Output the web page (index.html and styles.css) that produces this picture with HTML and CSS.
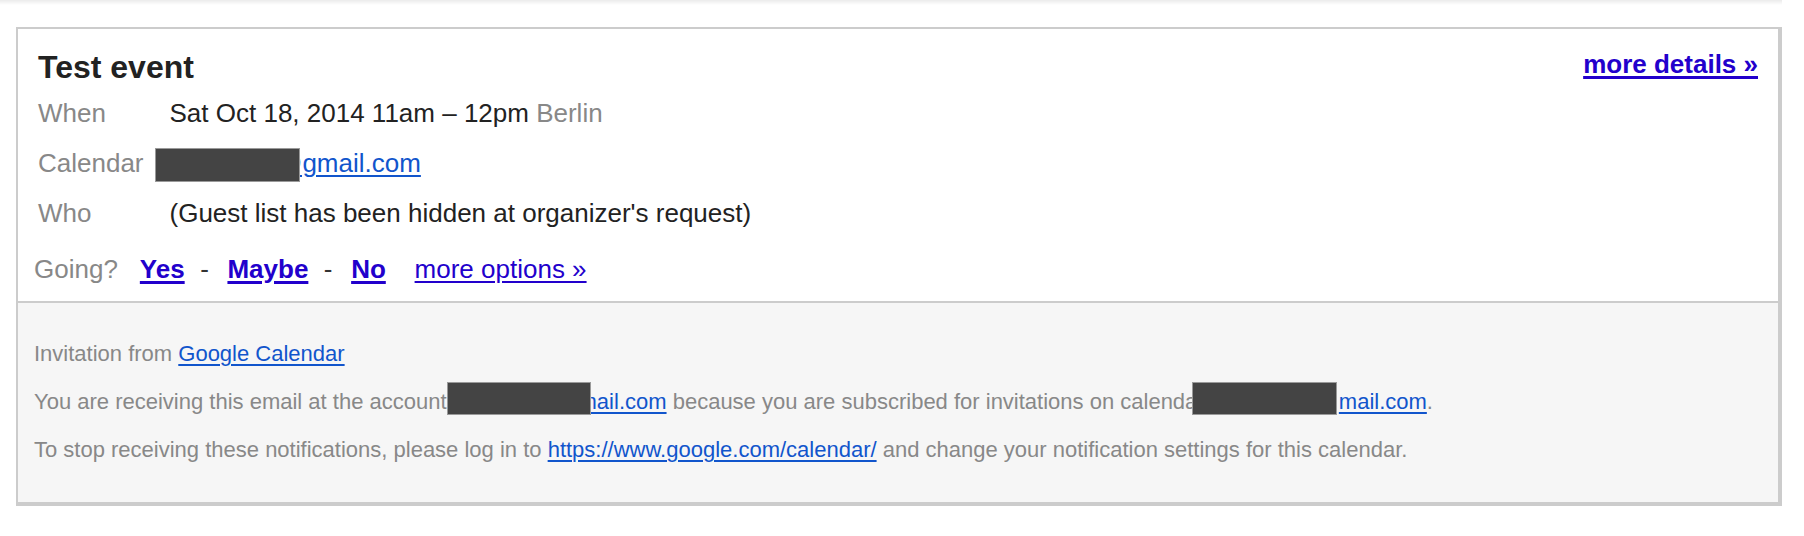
FILE: index.html
```html
<!DOCTYPE html>
<html>
<head>
<meta charset="utf-8">
<title>Test event</title>
<link rel="stylesheet" href="styles.css">
</head>
<body>
<div class="topshade"></div>
<div class="card">
  <div class="main">
    <div class="head">
      <h3 class="title">Test event</h3>
      <a class="details" href="#">more details »</a>
    </div>
    <div class="rows">
      <div class="label">When</div>
      <div class="value">Sat Oct 18, 2014 11am – 12pm <span class="muted">Berlin</span></div>
      <div class="label">Calendar</div>
      <div class="value"><span class="redact redact-cal"></span><a class="link" href="#">@gmail.com</a></div>
      <div class="label">Who</div>
      <div class="value">(Guest list has been hidden at organizer's request)</div>
    </div>
    <div class="going">
      <span class="going-label">Going?</span>
      <a class="rsvp rsvp-first" href="#">Yes</a>
      <span class="dash">-</span>
      <a class="rsvp" href="#">Maybe</a>
      <span class="dash">-</span>
      <a class="rsvp" href="#">No</a>
      <a class="more-options" href="#">more options »</a>
    </div>
  </div>
  <div class="footer">
    <p>Invitation from <a class="link" href="#">Google Calendar</a></p>
    <p>You are receiving this email at the account<span class="redact redact-acc"></span><a class="link" href="#">mail.com</a> because you are subscribed for invitations on calenda<span class="redact redact-cal2"></span><a class="link" href="#">mail.com</a>.</p>
    <p>To stop receiving these notifications, please log in to <a class="link" href="#">https://www.google.com/calendar/</a> and change your notification settings for this calendar.</p>
  </div>
</div>
</body>
</html>
```

FILE: styles.css
```css
* {
  box-sizing: border-box;
}

body {
  margin: 0;
  background: #fff;
  font-family: "Liberation Sans", Arial, Helvetica, sans-serif;
}

.topshade {
  width: 1782px;
  height: 5px;
  background: linear-gradient(#ebebeb, #ffffff);
}

.card {
  margin: 22px 0 0 16px;
  width: 1766px;
  border-style: solid;
  border-color: #cccccc;
  border-width: 2px 4px 4px 2px;
}

.main {
  background: #fff;
  padding: 20px 20px 17px 16px;
}

.head {
  display: flex;
  justify-content: space-between;
  align-items: flex-start;
  padding-left: 4px;
  margin-bottom: 12px;
}

.title {
  margin: 0;
  font-size: 32px;
  line-height: 37px;
  font-weight: bold;
  color: #222;
}

.details {
  font-size: 26px;
  line-height: 30px;
  font-weight: bold;
  color: #20c;
  text-decoration-thickness: 3px;
  text-underline-offset: 3px;
}

.rows {
  display: grid;
  grid-template-columns: auto 1fr;
  row-gap: 20px;
  padding-left: 4px;
  font-size: 26px;
  line-height: 30px;
}

.label {
  color: #888;
  padding-right: 26px;
  white-space: nowrap;
}

.value {
  color: #222;
  white-space: nowrap;
}

.muted {
  color: #888;
}

.link {
  color: #1155cc;
  text-decoration-thickness: 2px;
  text-underline-offset: 3px;
}

.redact {
  position: relative;
  display: inline-block;
  vertical-align: top;
  background: #444;
  border: 1px solid #9a9a9a;
}

.redact-cal {
  width: 145px;
  height: 34px;
  margin: 0 -24px -4px -14.5px;
}

.redact-acc {
  width: 144px;
  height: 33px;
  margin: -7px -12px -1px 0;
}

.redact-cal2 {
  width: 145px;
  height: 33px;
  margin: -7px 2px -1px -5.5px;
}

.going {
  display: flex;
  align-items: baseline;
  margin-top: 26px;
  font-size: 26px;
  line-height: 30px;
  white-space: nowrap;
}

.going-label {
  color: #888;
}

.rsvp {
  margin-left: 18.6px;
  font-weight: bold;
  color: #20c;
  text-decoration-thickness: 3px;
  text-underline-offset: 3px;
}

.rsvp-first {
  margin-left: 22px;
}

.dash {
  margin-left: 15.5px;
  color: #333;
}

.more-options {
  margin-left: 28.8px;
  color: #20c;
  text-decoration-thickness: 2px;
  text-underline-offset: 3px;
}

.footer {
  background: #f6f6f6;
  border-top: 2px solid #cccccc;
  padding: 38px 16px 39px;
  font-size: 22px;
  color: #888;
  white-space: nowrap;
}

.footer p {
  margin: 0;
}

.footer p + p {
  margin-top: 22px;
}
```
